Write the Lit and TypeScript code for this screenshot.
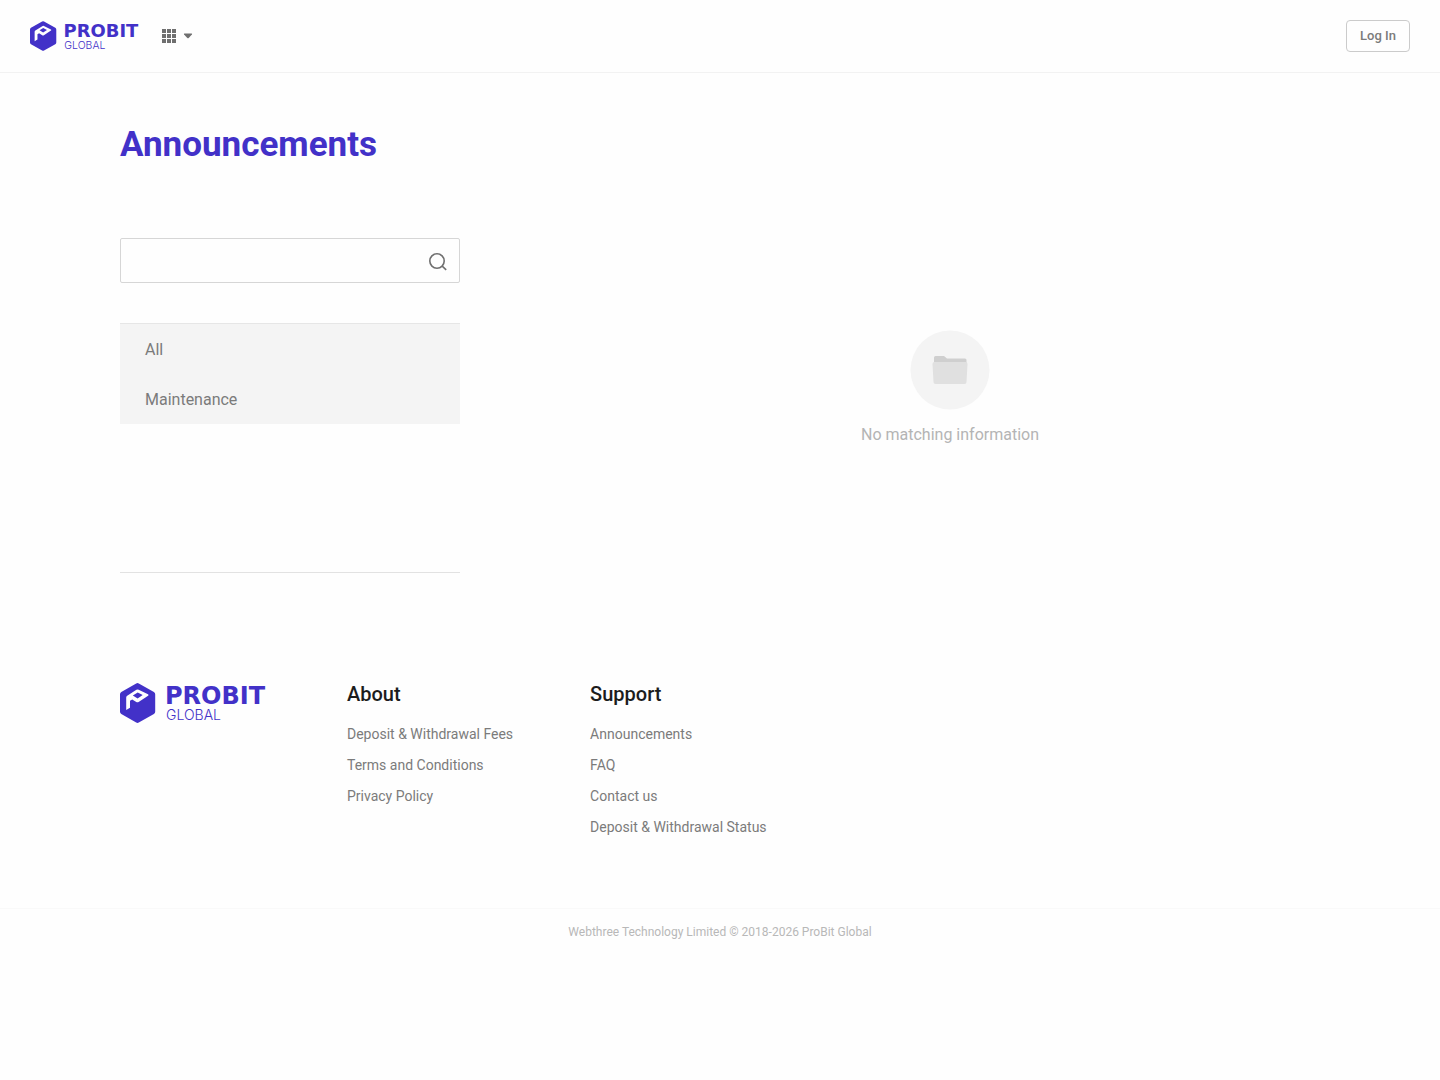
import { LitElement, html, css, svg } from "lit";
import { customElement, property } from "lit/decorators.js";

interface FooterGroup {
  title: string;
  links: string[];
}

const categories = ["All", "Maintenance"];

const footerGroups: FooterGroup[] = [
  { title: "About", links: ["Deposit & Withdrawal Fees", "Terms and Conditions", "Privacy Policy"] },
  { title: "Support", links: ["Announcements", "FAQ", "Contact us", "Deposit & Withdrawal Status"] },
];

const gridDots = [0, 5, 10].flatMap((y) => [0, 5, 10].map((x) => ({ x, y })));

@customElement("brand-logo")
export class BrandLogo extends LitElement {
  @property({ type: Boolean, reflect: true }) large = false;

  static styles = css`
    :host {
      display: block;
      width: 112px;
      height: 30px;
    }
    :host([large]) {
      width: 150px;
      height: 40px;
    }
    .logo {
      display: block;
      width: 100%;
      height: 100%;
      fill: #4231c8;
    }
    .cut {
      fill: #fefefe;
      fill-rule: evenodd;
    }
    .name {
      font: 700 24px "DejaVu Sans", sans-serif;
    }
    .sub {
      font: 300 14px Inter, sans-serif;
    }
  `;

  render() {
    return html`
      <svg class="logo" viewBox="0 0 150 40" preserveAspectRatio="xMinYMid" role="img" aria-label="ProBit Global">
        <path d="M16.2 .5a2.6 2.6 0 0 1 2.6 0L33.9 9a2.6 2.6 0 0 1 1.3 2.2v17.6a2.6 2.6 0 0 1-1.3 2.2l-15.1 8.5a2.6 2.6 0 0 1-2.6 0L1.3 31A2.6 2.6 0 0 1 0 28.8V11.2A2.6 2.6 0 0 1 1.3 9z" />
        <path class="cut" d="M6.200 27V14.500q0-1.200 1-1.800L16.400 6.800q1.100-.7 2.300-.1L28 11.200q1.200.7.100 1.500L18.600 19q-1.200.7-2.300 0L12.200 16.400L10 17.800V24.800zM12.800 12.400L17.600 15.400L22.700 12.100L17.700 9.400z" />
        <text class="name" x="45" y="21">PROBIT</text>
        <text class="sub" x="46" y="37">GLOBAL</text>
      </svg>
    `;
  }
}

@customElement("app-root")
export class AppRoot extends LitElement {
  static styles = css`
    :host {
      display: block;
      min-height: 100vh;
      background: #fefefe;
      color: #7b7b7b;
      font-family: Roboto, sans-serif;
      font-size: 14px;
    }
    * {
      box-sizing: border-box;
    }
    a {
      color: inherit;
      text-decoration: none;
    }
    button {
      font: inherit;
      color: inherit;
      cursor: pointer;
    }
    .header {
      display: flex;
      align-items: center;
      gap: 14px;
      height: 73px;
      padding: 0 30px;
      border-bottom: 1px solid #f2f2f2;
    }
    .apps {
      display: flex;
      align-items: center;
      gap: 7px;
      padding: 6px;
      border: 0;
      background: none;
      fill: #6f6f6f;
    }
    .login {
      margin-left: auto;
      height: 32px;
      padding: 0 13px 2px;
      border: 1px solid #cbcbcb;
      border-radius: 4px;
      background: none;
      font-size: 13px;
      font-weight: 500;
    }
    .container {
      max-width: 1200px;
      margin: 0 auto;
    }
    .title {
      margin: 0;
      padding: 51px 0 72px;
      color: #4231c8;
      font-size: 35px;
      font-weight: 700;
      line-height: 42px;
    }
    .columns {
      display: flex;
      gap: 120px;
    }
    .sidebar {
      width: 340px;
    }
    .search {
      display: flex;
      align-items: center;
      height: 45px;
      padding-right: 11px;
      border: 1px solid #d6d6d6;
      border-radius: 2px;
    }
    .search-input {
      flex: 1;
      min-width: 0;
      height: 100%;
      padding: 0 16px;
      border: 0;
      outline: 0;
      background: none;
      font: inherit;
      font-size: 16px;
    }
    .search-button {
      display: flex;
      padding: 2px 0 0;
      border: 0;
      background: none;
    }
    .icon {
      display: block;
    }
    .categories {
      min-height: 250px;
      margin-top: 40px;
      border-top: 1px solid #e6e6e6;
      border-bottom: 1px solid #e2e2e2;
    }
    .category {
      display: block;
      padding: 2px 25px 0;
      background: #f4f4f4;
      color: #7b7b7b;
      font-size: 16px;
      line-height: 48px;
    }
    .empty {
      flex: 1;
      display: flex;
      flex-direction: column;
      align-items: center;
      gap: 13px;
      padding-top: 92px;
      color: #b4b4b4;
      font-size: 16px;
      line-height: 24px;
    }
    .empty-text {
      margin: 0;
    }
    .footer {
      margin-top: 110px;
    }
    .footer-main {
      display: flex;
      gap: 77px;
      padding-bottom: 65px;
    }
    .footer-title {
      margin: 0 0 14px;
      color: #1c1c1c;
      font-size: 20px;
      font-weight: 500;
      line-height: 22px;
    }
    .footer-links {
      margin: 0;
      padding: 0;
      list-style: none;
      line-height: 31px;
    }
    .copyright {
      margin: 0;
      border-top: 1px solid #f9f9f9;
      color: #b8b8b8;
      font-size: 12px;
      line-height: 46px;
      text-align: center;
    }
  `;

  render() {
    return html`
      <header class="header">
        <a href="#" aria-label="ProBit Global"><brand-logo></brand-logo></a>
        <button class="apps" aria-label="Menu">
          <svg class="icon" width="14" height="14" viewBox="0 0 14 14">
            ${gridDots.map((d) => svg`<rect x=${d.x} y=${d.y} width="4" height="4" />`)}
          </svg>
          <svg class="icon" width="10" height="6" viewBox="0 0 10 6">
            <path d="M1.500 .5h7q1 .2 .4 1L5.700 5q-.7.7-1.400 0L1.100 1.500q-.6-.8.4-1z" />
          </svg>
        </button>
        <button class="login">Log In</button>
      </header>

      <main class="container">
        <h1 class="title">Announcements</h1>
        <div class="columns">
          <aside class="sidebar">
            <form class="search" role="search">
              <input class="search-input" type="text" aria-label="Search" />
              <button class="search-button" type="button" aria-label="Search">
                <svg class="icon" width="20" height="20" viewBox="0 0 20 20" fill="none" stroke="#6f6f6f" stroke-width="1.6">
                  <circle cx="9" cy="9" r="7.200" />
                  <path d="M14.200 14.200L18.200 17.800" />
                </svg>
              </button>
            </form>
            <nav class="categories" aria-label="Categories">
              ${categories.map((c) => html`<a class="category" href="#">${c}</a>`)}
            </nav>
          </aside>
          <section class="empty">
            <svg class="icon" width="80" height="80" viewBox="0 0 80 80">
              <circle cx="40" cy="40" r="39.500" fill="#f4f4f4" />
              <path d="M24 27.500a1.500 1.500 0 0 1 1.500-1.500h8.500l3 2.500h18a1.500 1.500 0 0 1 1.500 1.500V36H24z" fill="#cfcfcf" />
              <path d="M24.500 32h31a2 2 0 0 1 2 2l-1 18a2 2 0 0 1-2 2h-29a2 2 0 0 1-2-2l-1-18a2 2 0 0 1 2-2z" fill="#e0e0e0" />
            </svg>
            <p class="empty-text">No matching information</p>
          </section>
        </div>
      </main>

      <footer class="footer">
        <div class="container footer-main">
          <a href="#" aria-label="ProBit Global"><brand-logo large></brand-logo></a>
          ${footerGroups.map(
            (g) => html`
              <nav aria-label=${g.title}>
                <h2 class="footer-title">${g.title}</h2>
                <ul class="footer-links">
                  ${g.links.map((l) => html`<li><a href="#">${l}</a></li>`)}
                </ul>
              </nav>
            `
          )}
        </div>
        <p class="copyright">Webthree Technology Limited © 2018-2026 ProBit Global</p>
      </footer>
    `;
  }
}
